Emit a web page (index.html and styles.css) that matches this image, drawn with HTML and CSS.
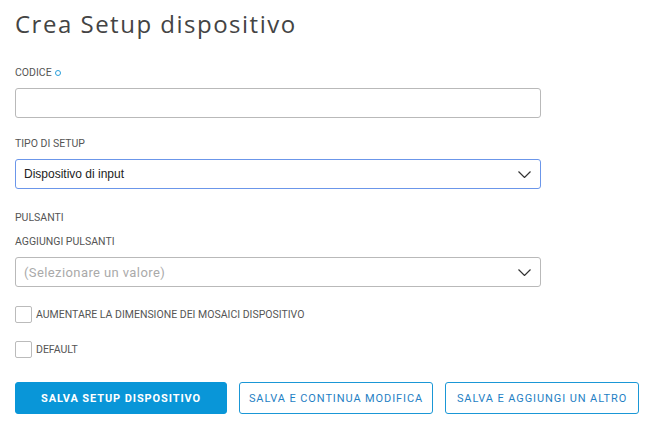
FILE: index.html
```html
<!DOCTYPE html>
<html lang="it">
<head>
<meta charset="utf-8">
<title>Crea Setup dispositivo</title>
<link rel="stylesheet" href="styles.css">
</head>
<body>
<main class="page">
  <h1 class="title">Crea Setup dispositivo</h1>
  <form class="form">
    <div class="field">
      <label class="label">CODICE <span class="req"></span></label>
      <div class="input"></div>
    </div>
    <div class="field">
      <label class="label">TIPO DI SETUP</label>
      <div class="select focused">
        <span class="value">Dispositivo di input</span>
        <svg class="chev" width="13" height="7" viewBox="0 0 13 7"><path d="M0.5 0.5l6 6 6-6" fill="none" stroke="#333" stroke-width="1.2"/></svg>
      </div>
    </div>
    <div class="section">PULSANTI</div>
    <div class="field">
      <label class="label">AGGIUNGI PULSANTI</label>
      <div class="select last">
        <span class="placeholder">(Selezionare un valore)</span>
        <svg class="chev" width="13" height="7" viewBox="0 0 13 7"><path d="M0.5 0.5l6 6 6-6" fill="none" stroke="#333" stroke-width="1.2"/></svg>
      </div>
    </div>
    <label class="check"><span class="box"></span>AUMENTARE LA DIMENSIONE DEI MOSAICI DISPOSITIVO</label>
    <label class="check"><span class="box"></span>DEFAULT</label>
    <div class="actions">
      <button type="button" class="btn primary">SALVA SETUP DISPOSITIVO</button>
      <button type="button" class="btn outline">SALVA E CONTINUA MODIFICA</button>
      <button type="button" class="btn outline">SALVA E AGGIUNGI UN ALTRO</button>
    </div>
  </form>
</main>
</body>
</html>
```

FILE: styles.css
```css
* { box-sizing: border-box; }
body {
  margin: 0;
  background: #fff;
  font-family: "Roboto", "Liberation Sans", sans-serif;
  color: #444;
}
.page { padding: 9px 15px 0 15px; }
.title {
  margin: 0;
  font-family: "Open Sans", sans-serif;
  font-weight: 400;
  font-size: 24px;
  letter-spacing: 1.5px;
  color: #444;
  line-height: 30px;
}
.form { display: flex; flex-direction: column; margin-top: 28px; }
.field { display: flex; flex-direction: column; }
.label, .section {
  font-size: 10.5px;
  color: #555;
  line-height: 12px;
  display: flex;
  align-items: center;
  gap: 3px;
}
.req {
  width: 6px; height: 6px;
  border: 1.3px solid #2aa0dc;
  border-radius: 50%;
}
.input, .select {
  width: 526px;
  height: 30px;
  border: 1px solid #b9b9b9;
  border-radius: 3px;
  margin-top: 9px;
  margin-bottom: 20px;
}
.select.last { margin-bottom: 19px; }
.select {
  display: flex;
  align-items: center;
  justify-content: space-between;
  padding: 0 9px 0 8px;
}
.select.focused { border-color: #6b96ea; }
.value { font-family: "Liberation Sans", Arial, sans-serif; font-size: 12px; color: #222; }
.placeholder { font-size: 13px; color: #aaa; letter-spacing: 0.4px; }
.section { margin-top: 3px; margin-bottom: 12px; }
.check {
  display: flex;
  align-items: center;
  gap: 4px;
  font-size: 10.5px;
  color: #555;
  height: 17px;
  margin-bottom: 18px;
}
.box {
  width: 17px; height: 17px;
  border: 1px solid #bbb;
  border-radius: 2px;
}
.actions { display: flex; gap: 12px; margin-top: 6px; }
.btn {
  height: 32px;
  border-radius: 3px;
  font-family: "Roboto", sans-serif;
  font-size: 11px;
  letter-spacing: 0.9px;
  padding: 0;
  white-space: nowrap;
  flex: none;
}
.primary {
  width: 212px;
  background: #0996d8;
  border: 1px solid #0996d8;
  color: #fff;
  font-weight: 700;
}
.outline {
  width: 194px;
  background: #fff;
  border: 1px solid #1a97d6;
  color: #1f7fc4;
}
```
